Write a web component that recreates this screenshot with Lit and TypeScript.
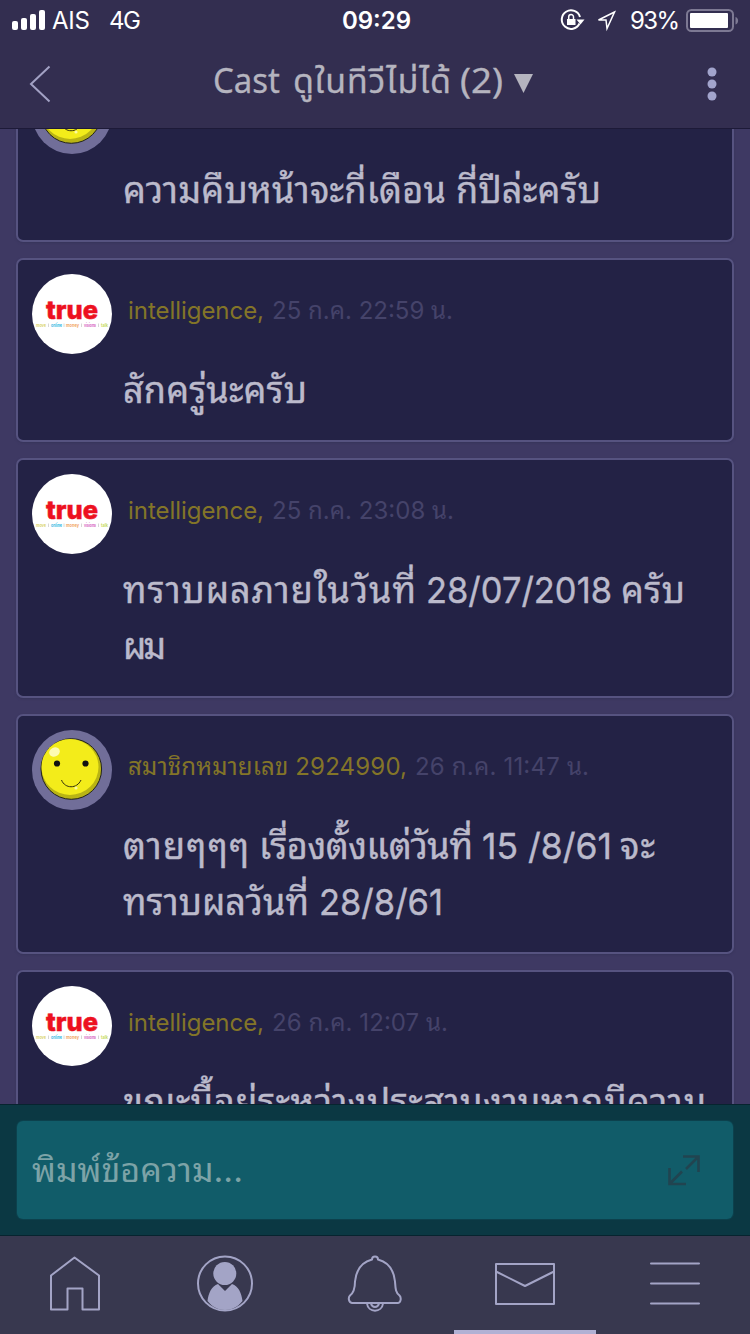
import { LitElement, html, svg, css } from "lit";
import { customElement, property } from "lit/decorators.js";

interface Run {
  t: string;
  x: number;
  w: number;
  squeeze?: boolean;
}

interface Post {
  kind: "true" | "smiley";
  name: string;
  time: string;
  lines: Run[][];
  nameWidth: number;
  timeWidth: number;
}

const posts: Post[] = [
  {
    kind: "smiley", name: "สมาชิกหมายเลข 2924990,", time: "25 ก.ค. 22:51 น.", nameWidth: 280, timeWidth: 182,
    lines: [[{ t: "ความคืบหน้าจะกี่เดือน", x: 0, w: 323 }, { t: "กี่ปีล่ะครับ", x: 333, w: 145 }]],
  },
  {
    kind: "true", name: "intelligence,", time: "25 ก.ค. 22:59 น.", nameWidth: 136, timeWidth: 181,
    lines: [[{ t: "สักครู่นะครับ", x: 0, w: 184 }]],
  },
  {
    kind: "true", name: "intelligence,", time: "25 ก.ค. 23:08 น.", nameWidth: 136, timeWidth: 182,
    lines: [
      [{ t: "ทราบผลภายในวันที่", x: 0, w: 293 }, { t: "28/07/2018", x: 303, w: 186, squeeze: true }, { t: "ครับ", x: 498, w: 64 }],
      [{ t: "ผม", x: 0, w: 43 }],
    ],
  },
  {
    kind: "smiley", name: "สมาชิกหมายเลข 2924990,", time: "26 ก.ค. 11:47 น.", nameWidth: 279, timeWidth: 174,
    lines: [
      [{ t: "ตายๆๆๆ", x: 0, w: 126 }, { t: "เรื่องตั้งแต่วันที่", x: 136, w: 214 }, { t: "15 /8/61", x: 359, w: 130, squeeze: true }, { t: "จะ", x: 497, w: 35 }],
      [{ t: "ทราบผลวันที่", x: 0, w: 186 }, { t: "28/8/61", x: 196, w: 124, squeeze: true }],
    ],
  },
  {
    kind: "true", name: "intelligence,", time: "26 ก.ค. 12:07 น.", nameWidth: 136, timeWidth: 176,
    lines: [[{ t: "ขณะนี้อยู่ระหว่างประสานงานหากมีความ", x: 0, w: 583 }]],
  },
];

/* One line of text set to a fixed measure, as a single run or several. */
@customElement("fit-text")
class FitText extends LitElement {
  @property() text = "";
  @property({ attribute: false }) runs: Run[] = [];
  @property({ type: Number }) width = 100;
  @property({ type: Number }) base = 40;
  @property({ type: Number }) box = 56;
  static styles = css`
    :host { display: block; }
    svg { display: block; overflow: visible; }
    text { fill: currentColor; stroke: currentColor; stroke-width: var(--weight, 0); }
  `;
  render() {
    const runs: Run[] = this.runs.length ? this.runs : [{ t: this.text, x: 0, w: this.width }];
    return html`<svg width=${this.width} height=${this.box}>
      ${runs.map((r) => svg`<text x=${r.x} y=${this.base} textLength=${r.w} lengthAdjust=${r.squeeze ? "spacingAndGlyphs" : "spacing"}>${r.t}</text>`)}
    </svg>`;
  }
}

@customElement("post-avatar")
class PostAvatar extends LitElement {
  @property() kind = "true";
  static styles = css`
    :host { display: block; width: 80px; height: 80px; }
    svg { display: block; }
    .brand { font: 800 26px Inter, sans-serif; fill: #ed1020; stroke: #ed1020; stroke-width: 0.5px; }
    .sub { font: 600 5px Inter, sans-serif; }
  `;
  render() {
    return this.kind === "true"
      ? html`<svg width="80" height="80" viewBox="0 0 80 80">
          <circle cx="40" cy="40" r="40" fill="#fff" />
          <text class="brand" x="14" y="45" textLength="52" lengthAdjust="spacingAndGlyphs">true</text>
          <g class="sub">
            <text x="4" y="53" textLength="10" lengthAdjust="spacingAndGlyphs" fill="#d8d05a">move</text>
            <text x="19" y="53" textLength="11" lengthAdjust="spacingAndGlyphs" fill="#20b0e0">online</text>
            <text x="34" y="53" textLength="13" lengthAdjust="spacingAndGlyphs" fill="#f09a50">money</text>
            <text x="52" y="53" textLength="12" lengthAdjust="spacingAndGlyphs" fill="#d050b8">visions</text>
            <text x="69" y="53" textLength="7" lengthAdjust="spacingAndGlyphs" fill="#c4d850">talk</text>
          </g>
          <path d="M16.500 49.500v3.500M32 49.500v3.500M49.500 49.500v3.500M66.500 49.500v3.500" stroke="#ccc" stroke-width=".8" />
        </svg>`
      : html`<svg width="80" height="80" viewBox="0 0 80 80">
          <circle cx="40" cy="40" r="40" fill="#716e99" />
          <circle cx="39.300" cy="39" r="30.300" fill="#b9b414" stroke="#22221c" stroke-width="1" />
          <ellipse cx="38" cy="37" rx="28.500" ry="28" fill="#f3ec1a" />
          <ellipse cx="22.500" cy="22" rx="5.500" ry="4.500" fill="#fdfbb4" transform="rotate(-25 22.500 22)" />
          <circle cx="25" cy="33.500" r="3.100" fill="#111" />
          <circle cx="53.500" cy="33.500" r="3.100" fill="#111" />
          <path d="M29.500 50c3.500 9 15.500 9 19.500 0" fill="none" stroke="#33300c" stroke-width="1" />
          <circle cx="44" cy="58" r="1.600" fill="#fbf9a0" />
        </svg>`;
  }
}

@customElement("post-card")
class PostCard extends LitElement {
  @property({ attribute: false }) post!: Post;
  static styles = css`
    :host { display: block; flex: none; }
    .card {
      box-sizing: border-box; border: 2px solid #565380; border-radius: 7px; background: #232245;
      padding: 14px 14px 22px; box-shadow: 0 1px 2px #37345a;
    }
    .head { display: flex; gap: 16px; height: 88px; }
    .meta { display: flex; gap: 8px; padding-top: 14px; font-size: 24px; }
    .name { color: #837528; }
    .time { color: #45436a; }
    .body { padding-left: 91px; font-size: 36px; color: #bbbacb; --weight: 0.4px; }
  `;
  render() {
    const p = this.post;
    return html`<article class="card">
      <header class="head">
        <post-avatar kind=${p.kind}></post-avatar>
        <div class="meta">
          <fit-text class="name" .text=${p.name} .width=${p.nameWidth} .base=${31} .box=${40}></fit-text>
          <fit-text class="time" .text=${p.time} .width=${p.timeWidth} .base=${31} .box=${40}></fit-text>
        </div>
      </header>
      <div class="body">
        ${p.lines.map((l) => html`<fit-text .runs=${l} .width=${588} .base=${40.5}></fit-text>`)}
      </div>
    </article>`;
  }
}

const icons = [
  svg`<path d="M51 1275.500L74.500 1257.500L99 1275.500V1309.500H82.500V1288.500H67.500V1309.500H51Z" />`,
  svg`<circle cx="225" cy="1283.500" r="27" /><g fill="#a3a4c6" stroke="none"><circle cx="224.800" cy="1273.500" r="11.500" /><path d="M207.500 1301c1-8 4-15 10.500-17l7 7 7-7c6.500 2 9.500 9 10.500 17-9 12-26 12-35 0z" /></g>`,
  svg`<path d="M372 1259.500c0-4 6-4 6 0 11.500 3 16 12 17 22 .5 7 .5 11 4.500 14 2 2 1.500 7-1.500 7.500H352c-3.500-.5-4-5.500-2-7.500 4-3 5-7 5-14 1-10 5.500-19 17-22z" /><path d="M367 1303.500c1 9.500 15 9.500 16 0M371 1303.500c1 4.500 7 4.500 8 0" />`,
  svg`<path d="M496 1264h58v40h-58zM496 1271.500l29 14.500 29-14.500" />`,
  svg`<path d="M651 1263.500h48M651 1283.500h48M651 1303.500h48" />`,
];

@customElement("app-root")
class AppRoot extends LitElement {
  static styles = css`
    :host {
      display: flex; flex-direction: column; width: 750px; height: 1334px; overflow: hidden;
      background: #3e3963;
      font-family: Inter, "Noto Sans Thai Looped", "Noto Looped Thai", Loma, Garuda, Waree, Umpush, Laksaman, sans-serif;
    }
    svg { display: block; }
    .status { flex: none; height: 40px; background: #332e50; display: grid; grid-template-columns: 1fr auto 1fr; align-items: center; color: #fff; font-size: 24px; }
    .clock { font-weight: 600; padding-left: 3px; }
    .left { display: flex; align-items: center; padding-left: 12px; gap: 7px; }
    .network { padding-left: 12px; }
    .right { display: flex; align-items: center; justify-content: flex-end; padding-right: 10px; }
    .title-bar { flex: none; box-sizing: border-box; height: 89px; border-bottom: 1px solid #1d1a38; background: #332e50; display: grid; grid-template-columns: 187px 1fr auto; padding: 0 30px 0 28px; color: #b5b4bf; }
    .title { display: flex; gap: 11px; font-family: "Noto Sans", "Noto Sans Thai", sans-serif; font-size: 34px; --weight: 0.3px; }
    .feed { flex: none; height: 975px; overflow: hidden; box-sizing: border-box; padding: 0 16px; }
    .stack { display: flex; flex-direction: column; gap: 16px; margin-top: -71px; }
    .composer { flex: none; box-sizing: border-box; height: 132px; padding: 16px; background: #0b3843; border: solid #07242f; border-width: 1px 0; }
    .field { box-sizing: border-box; height: 98px; border-radius: 6px; background: #115c69; box-shadow: 0 0 0 1px #0c414d; display: flex; justify-content: space-between; padding: 20px 33px 0 15px; margin: 0 1px; font-size: 34px; color: #7da3a7; }
    .nav { flex: none; height: 98px; background: #38384f; display: grid; grid-template-columns: repeat(5, 1fr); }
    .nav-art { fill: none; stroke: #a3a4c6; stroke-width: 2; stroke-linejoin: round; stroke-linecap: round; }
    .tab { display: flex; flex-direction: column; justify-content: space-between; align-items: center; }
    .bar { width: 142px; height: 4px; background: #b1b1d4; }
  `;
  render() {
    const title: Run[] = [
      { t: "Cast", x: -2, w: 67, squeeze: true },
      { t: "ดูในทีวีไม่ได้", x: 78, w: 158 },
      { t: "(2)", x: 245, w: 43, squeeze: true },
    ];
    return html`
      <div class="status">
        <div class="left">
          <svg width="33" height="20" fill="#fff"><rect x="0" y="11" width="6" height="9" rx="2" /><rect x="9" y="8" width="6" height="12" rx="2" /><rect x="18" y="4" width="6" height="16" rx="2" /><rect x="27" y="0" width="6" height="20" rx="2" /></svg>
          <fit-text .text=${"AIS"} .width=${38} .base=${21} .box=${24}></fit-text>
          <fit-text class="network" .text=${"4G"} .width=${32} .base=${21} .box=${24}></fit-text>
        </div>
        <fit-text class="clock" .text=${"09:29"} .width=${69} .base=${21} .box=${24}></fit-text>
        <div class="right">
          <svg width="70" height="24" fill="none" stroke="#fff" stroke-width="2"><path d="M19.500 15.500A9.300 9.300 0 1 1 20 9" /><path d="M16.500 11.500h8l-4 5z" fill="#fff" stroke="none" /><rect x="7" y="11" width="8.500" height="6" fill="#fff" stroke="none" /><path d="M8.700 11V9a2.400 2.400 0 0 1 4.800 0v2" stroke-width="1.500" /><path d="M54.500 4L38.500 12H46L47 20.500Z" stroke-width="1.500" /></svg>
          <fit-text .text=${"93%"} .width=${50} .base=${21} .box=${24}></fit-text>
          <svg width="60" height="24"><rect x="7" y="2" width="46" height="21" rx="4.500" fill="none" stroke="#7d7993" stroke-width="2" /><rect x="10" y="5" width="38" height="15" rx="1" fill="#fff" /><path d="M55.500 9c3.500 1 3.500 6.500 0 7.500z" fill="#7d7993" /></svg>
        </div>
      </div>
      <div class="title-bar">
        <svg width="24" height="80" fill="none" stroke="#a2a1c4" stroke-width="2"><path d="M21.500 26.500L3 44l18.500 17.500" /></svg>
        <div class="title">
          <fit-text .runs=${title} .width=${288} .base=${53} .box=${80}></fit-text>
          <svg width="20" height="80"><path d="M0 34h19l-9.500 19z" fill="#b5b4bf" /></svg>
        </div>
        <svg width="20" height="80" fill="#a2a4cc"><circle cx="12" cy="32" r="4.500" /><circle cx="12" cy="44" r="4.500" /><circle cx="12" cy="56" r="4.500" /></svg>
      </div>
      <main class="feed"><div class="stack">${posts.map((p) => html`<post-card .post=${p}></post-card>`)}</div></main>
      <div class="composer">
        <div class="field">
          <fit-text .text=${"พิมพ์ข้อความ..."} .width=${211} .base=${41}></fit-text>
          <svg width="32" height="60" fill="none" stroke="#214450" stroke-width="2.600"><path d="M15 15.500h15.500v15.500M30 16L18 28M1.500 27v16h16.500M2 42.500L14 30.500" /></svg>
        </div>
      </div>
      <nav class="nav">
        ${icons.map((icon, i) => html`<div class="tab">
          <svg class="nav-art" width="150" height="94" viewBox="${i * 150} 1236 150 94">${icon}</svg>
          ${i === 3 ? html`<div class="bar"></div>` : ""}
        </div>`)}
      </nav>`;
  }
}
